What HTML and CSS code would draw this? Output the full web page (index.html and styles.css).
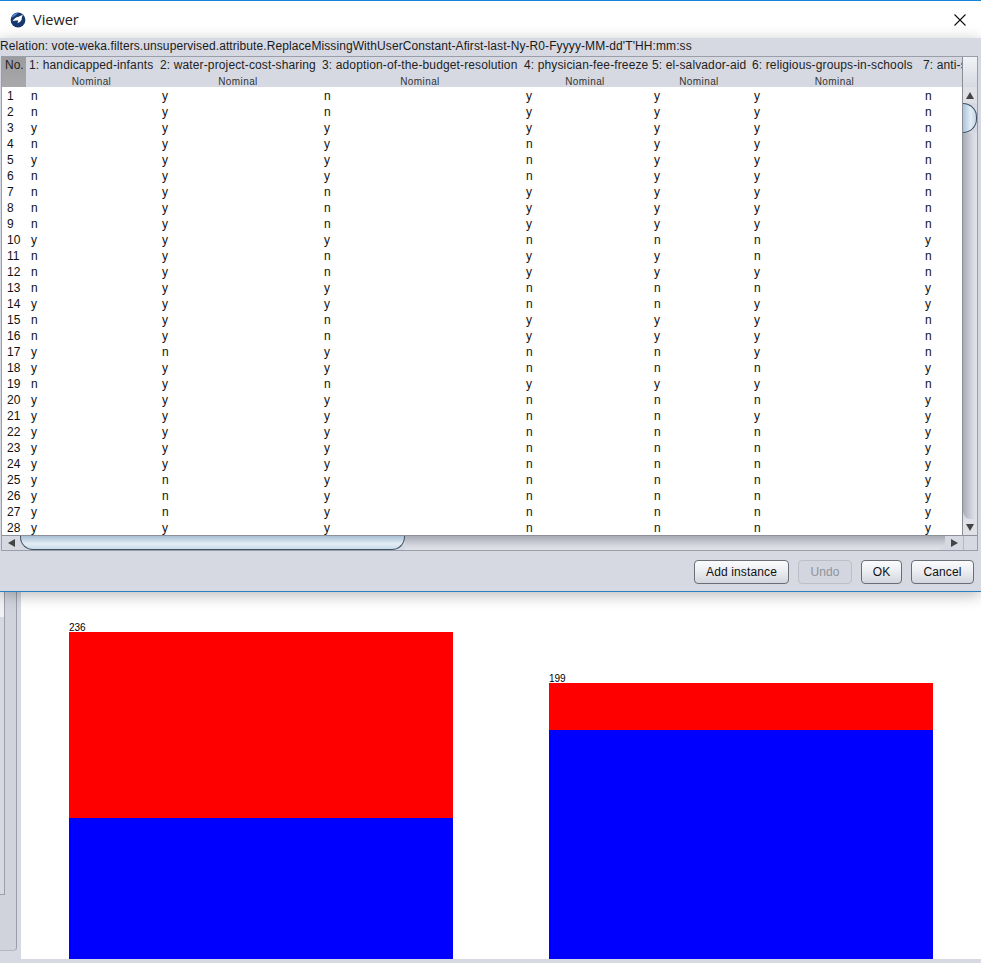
FILE: index.html
```html
<!DOCTYPE html>
<html lang="en">
<head>
    <meta charset="UTF-8">
    <title>Viewer</title>
    <link rel="stylesheet" href="styles.css">
</head>
<body>
    <div class="titlebar">
        <svg class="app-icon" width="16" height="16" viewBox="0 0 16 16">
            <circle cx="8" cy="8" r="7.4" fill="#17386f"/>
            <path d="M1.4 6 A7 7 0 0 1 8 0.9 L5.5 3.6 Z" fill="#4f86d4"/>
            <path d="M2.6 9.2 C4 6.6 6 5.2 8 5 L12.8 2.8 L11.8 5.6 C12.2 8 10.2 10.6 7.6 11.2 L8.2 8.6 C6.2 8.2 4.2 8.4 2.6 9.2 Z" fill="#fff"/>
        </svg>
        <span class="title">Viewer</span>
        <svg class="close" width="12" height="12" viewBox="0 0 12 12">
            <path d="M0.5 0.5 L11.5 11.5 M11.5 0.5 L0.5 11.5" stroke="#111" stroke-width="1.1" fill="none"/>
        </svg>
    </div>

    <div class="dialog">
        <div class="relation">Relation: vote-weka.filters.unsupervised.attribute.ReplaceMissingWithUserConstant-Afirst-last-Ny-R0-Fyyyy-MM-dd'T'HH:mm:ss</div>
        <div class="frame">
            <div class="frame-body">
                <div class="table-clip">
                    <table class="data">
                        <colgroup>
                            <col class="c-no"><col class="c1"><col class="c2"><col class="c3"><col class="c4"><col class="c5"><col class="c6"><col class="c7">
                        </colgroup>
                        <thead>
                            <tr>
                                <th class="no-head">No.</th>
                                <th><div class="name">1: handicapped-infants</div><div class="type">Nominal</div></th>
                                <th><div class="name">2: water-project-cost-sharing</div><div class="type">Nominal</div></th>
                                <th><div class="name">3: adoption-of-the-budget-resolution</div><div class="type">Nominal</div></th>
                                <th><div class="name">4: physician-fee-freeze</div><div class="type">Nominal</div></th>
                                <th><div class="name">5: el-salvador-aid</div><div class="type">Nominal</div></th>
                                <th><div class="name">6: religious-groups-in-schools</div><div class="type">Nominal</div></th>
                                <th><div class="name">7: anti-s</div></th>
                            </tr>
                        </thead>
                        <tbody>
                            <tr><td>1</td><td>n</td><td>y</td><td>n</td><td>y</td><td>y</td><td>y</td><td>n</td></tr>
                            <tr><td>2</td><td>n</td><td>y</td><td>n</td><td>y</td><td>y</td><td>y</td><td>n</td></tr>
                            <tr><td>3</td><td>y</td><td>y</td><td>y</td><td>y</td><td>y</td><td>y</td><td>n</td></tr>
                            <tr><td>4</td><td>n</td><td>y</td><td>y</td><td>n</td><td>y</td><td>y</td><td>n</td></tr>
                            <tr><td>5</td><td>y</td><td>y</td><td>y</td><td>n</td><td>y</td><td>y</td><td>n</td></tr>
                            <tr><td>6</td><td>n</td><td>y</td><td>y</td><td>n</td><td>y</td><td>y</td><td>n</td></tr>
                            <tr><td>7</td><td>n</td><td>y</td><td>n</td><td>y</td><td>y</td><td>y</td><td>n</td></tr>
                            <tr><td>8</td><td>n</td><td>y</td><td>n</td><td>y</td><td>y</td><td>y</td><td>n</td></tr>
                            <tr><td>9</td><td>n</td><td>y</td><td>n</td><td>y</td><td>y</td><td>y</td><td>n</td></tr>
                            <tr><td>10</td><td>y</td><td>y</td><td>y</td><td>n</td><td>n</td><td>n</td><td>y</td></tr>
                            <tr><td>11</td><td>n</td><td>y</td><td>n</td><td>y</td><td>y</td><td>n</td><td>n</td></tr>
                            <tr><td>12</td><td>n</td><td>y</td><td>n</td><td>y</td><td>y</td><td>y</td><td>n</td></tr>
                            <tr><td>13</td><td>n</td><td>y</td><td>y</td><td>n</td><td>n</td><td>n</td><td>y</td></tr>
                            <tr><td>14</td><td>y</td><td>y</td><td>y</td><td>n</td><td>n</td><td>y</td><td>y</td></tr>
                            <tr><td>15</td><td>n</td><td>y</td><td>n</td><td>y</td><td>y</td><td>y</td><td>n</td></tr>
                            <tr><td>16</td><td>n</td><td>y</td><td>n</td><td>y</td><td>y</td><td>y</td><td>n</td></tr>
                            <tr><td>17</td><td>y</td><td>n</td><td>y</td><td>n</td><td>n</td><td>y</td><td>n</td></tr>
                            <tr><td>18</td><td>y</td><td>y</td><td>y</td><td>n</td><td>n</td><td>n</td><td>y</td></tr>
                            <tr><td>19</td><td>n</td><td>y</td><td>n</td><td>y</td><td>y</td><td>y</td><td>n</td></tr>
                            <tr><td>20</td><td>y</td><td>y</td><td>y</td><td>n</td><td>n</td><td>n</td><td>y</td></tr>
                            <tr><td>21</td><td>y</td><td>y</td><td>y</td><td>n</td><td>n</td><td>y</td><td>y</td></tr>
                            <tr><td>22</td><td>y</td><td>y</td><td>y</td><td>n</td><td>n</td><td>n</td><td>y</td></tr>
                            <tr><td>23</td><td>y</td><td>y</td><td>y</td><td>n</td><td>n</td><td>n</td><td>y</td></tr>
                            <tr><td>24</td><td>y</td><td>y</td><td>y</td><td>n</td><td>n</td><td>n</td><td>y</td></tr>
                            <tr><td>25</td><td>y</td><td>n</td><td>y</td><td>n</td><td>n</td><td>n</td><td>y</td></tr>
                            <tr><td>26</td><td>y</td><td>n</td><td>y</td><td>n</td><td>n</td><td>n</td><td>y</td></tr>
                            <tr><td>27</td><td>y</td><td>n</td><td>y</td><td>n</td><td>n</td><td>n</td><td>y</td></tr>
                            <tr><td>28</td><td>y</td><td>y</td><td>y</td><td>n</td><td>n</td><td>n</td><td>y</td></tr>
                        </tbody>
                    </table>
                </div>
                <div class="vscroll">
                    <div class="corner"></div>
                    <div class="vtrack">
                        <div class="arrow-btn"><span class="tri tri-up"></span></div>
                        <div class="vthumb"></div>
                        <div class="vrest"></div>
                        <div class="arrow-btn"><span class="tri tri-down"></span></div>
                    </div>
                </div>
            </div>
            <div class="hscroll">
                <div class="arrow-btn-h"><span class="tri tri-left"></span></div>
                <div class="hthumb"></div>
                <div class="hrest"></div>
                <div class="arrow-btn-h"><span class="tri tri-right"></span></div>
                <div class="hcorner"></div>
            </div>
        </div>
        <div class="buttons">
            <button class="btn btn-add" type="button">Add instance</button>
            <button class="btn btn-undo" type="button" disabled>Undo</button>
            <button class="btn btn-ok" type="button">OK</button>
            <button class="btn btn-cancel" type="button">Cancel</button>
        </div>
    </div>

    <div class="below">
        <div class="side">
            <div class="side-box">
                <div class="side-inner">
                    <div class="side-inner-top"></div>
                </div>
            </div>
        </div>
        <div class="chart">
            <div class="bar">
                <div class="count">236</div>
                <div class="red red-a"></div>
                <div class="blue blue-a"></div>
            </div>
            <div class="bar">
                <div class="count">199</div>
                <div class="red red-b"></div>
                <div class="blue blue-b"></div>
            </div>
        </div>
    </div>
</body>
</html>
```

FILE: styles.css
```css
html, body {
    margin: 0;
    padding: 0;
}
body {
    width: 981px;
    height: 963px;
    overflow: hidden;
    background: #d6d9e2;
    font-family: "Liberation Sans", Arial, sans-serif;
    font-size: 12px;
    color: #111;
    display: flex;
    flex-direction: column;
}

/* title bar */
.titlebar {
    height: 37px;
    flex: none;
    background: #fff;
    border-top: 1px solid #1583d7;
    display: flex;
    align-items: center;
    padding-left: 10px;
    padding-right: 15px;
}
.app-icon {
    margin-right: 7px;
}
.title {
    font-family: "Open Sans", sans-serif;
    font-size: 14.5px;
    color: #222;
}
.close {
    margin-left: auto;
}

/* dialog */
.dialog {
    flex: none;
    height: 553px;
    background: #d6d9e2;
    border-bottom: 1px solid #2a7fc0;
    box-shadow: 0 3px 14px rgba(0, 0, 0, 0.28);
    position: relative;
    z-index: 1;
    display: flex;
    flex-direction: column;
}
.relation {
    height: 18px;
    line-height: 17px;
    white-space: nowrap;
    color: #1a1a1a;
    letter-spacing: 0.09px;
}
.frame {
    margin-left: 1px;
    width: 977px;
    height: 495px;
    box-sizing: border-box;
    border: 1px solid #9a9ea8;
    display: flex;
    flex-direction: column;
}
.frame-body {
    display: flex;
    height: 478px;
}
.table-clip {
    width: 961px;
    overflow: hidden;
    background: #fff;
}

/* table */
.data {
    table-layout: fixed;
    border-collapse: collapse;
    width: 961px;
}
.c-no { width: 24px; }
.c1 { width: 131px; }
.c2 { width: 162px; }
.c3 { width: 202px; }
.c4 { width: 128px; }
.c5 { width: 100px; }
.c6 { width: 171px; }
.c7 { width: 43px; }
.data th {
    height: 30px;
    padding: 0;
    background: #d6d9e2;
    font-weight: normal;
    color: #222;
    vertical-align: top;
}
.data th.no-head {
    background: linear-gradient(#9c9c9e, #a9a9ab);
    line-height: 16px;
    text-align: left;
    padding-left: 3px;
}
.name {
    height: 16px;
    line-height: 16px;
    text-align: left;
    padding-left: 3px;
    white-space: nowrap;
    overflow: hidden;
    letter-spacing: 0.13px;
}
.type {
    height: 14px;
    line-height: 17px;
    font-size: 10px;
    letter-spacing: 0.4px;
    color: #333;
    text-align: center;
}
.data td {
    height: 14px;
    padding: 2px 0 0 5px;
    line-height: 14px;
    color: #111;
}

/* scrollbars */
.vscroll {
    width: 14px;
    border-left: 1px solid #8a8d96;
    display: flex;
    flex-direction: column;
}
.corner {
    height: 30px;
    flex: none;
    background: linear-gradient(#f2f3f6, #d6d9e2);
}
.vtrack {
    flex: 1;
    display: flex;
    flex-direction: column;
    background: #d6d9e2;
}
.arrow-btn {
    height: 16px;
    flex: none;
    display: flex;
    align-items: center;
    justify-content: center;
    background: #dfe1e7;
}
.vthumb {
    height: 30px;
    flex: none;
    box-sizing: border-box;
    border: 1px solid #3f5266;
    border-left: none;
    border-radius: 0 14px 14px 0;
    background: linear-gradient(90deg, #a9c4dc, #e3edf5 60%, #c3d6e6);
}
.vrest {
    flex: 1;
    background: linear-gradient(90deg, #a8abb3, #d6d9e2 70%, #e2e4ea);
    border-radius: 0 0 0 8px;
}
.hscroll {
    height: 15px;
    display: flex;
    background: #d6d9e2;
    border-top: 1px solid #8e9199;
    box-sizing: border-box;
}
.arrow-btn-h {
    width: 18px;
    flex: none;
    display: flex;
    align-items: center;
    justify-content: center;
}
.hthumb {
    width: 385px;
    flex: none;
    box-sizing: border-box;
    border: 1px solid #3f5266;
    border-top: none;
    border-radius: 0 0 13px 13px;
    background: linear-gradient(#a9bfd4, #e3edf5 60%, #c9dbe9);
}
.hrest {
    width: 540px;
    flex: none;
    background: linear-gradient(#a8abb3, #d6d9e2 70%, #e2e4ea);
    border-radius: 0 0 8px 0;
}
.hcorner {
    flex: 1;
    border-left: 1px solid #b5b8c0;
}
.tri {
    display: block;
    width: 0;
    height: 0;
}
.tri-up {
    border-left: 4px solid transparent;
    border-right: 4px solid transparent;
    border-bottom: 7px solid #444;
}
.tri-down {
    border-left: 4px solid transparent;
    border-right: 4px solid transparent;
    border-top: 7px solid #444;
}
.tri-left {
    border-top: 4px solid transparent;
    border-bottom: 4px solid transparent;
    border-right: 7px solid #444;
}
.tri-right {
    border-top: 4px solid transparent;
    border-bottom: 4px solid transparent;
    border-left: 7px solid #444;
}

/* buttons */
.buttons {
    display: flex;
    justify-content: flex-end;
    gap: 9px;
    padding-right: 7px;
    margin-top: 9px;
}
.btn {
    height: 24px;
    padding: 0;
    font-family: "Liberation Sans", Arial, sans-serif;
    font-size: 12px;
    letter-spacing: 0.13px;
    color: #111;
    border: 1px solid #6b6e76;
    border-radius: 4px;
    background: linear-gradient(#fbfbfc, #eceef2 45%, #d3d6de);
}
.btn-add { width: 95px; }
.btn-undo {
    width: 54px;
    color: #8f939b;
    border-color: #bcbfc7;
    background: #d3d6de;
}
.btn-ok { width: 41px; }
.btn-cancel { width: 63px; }

/* lower window */
.below {
    flex: 1;
    display: flex;
    padding-bottom: 4px;
}
.side {
    width: 21px;
    flex: none;
    box-sizing: border-box;
    padding-right: 4px;
}
.side-box {
    height: 359px;
    box-sizing: border-box;
    border-right: 1px solid #9a9ea8;
    border-bottom: 1px solid #b5b8c0;
    border-radius: 0 0 4px 0;
    background: #d0d3dc;
}
.side-inner {
    width: 5px;
    height: 303px;
    box-sizing: border-box;
    border-right: 1px solid #9a9ea8;
    border-bottom: 1px solid #9a9ea8;
    background: #d6d9e2;
}
.side-inner-top {
    height: 25px;
    background: #f1f1f3;
}
.chart {
    flex: 1;
    background: #fff;
    display: flex;
    align-items: flex-end;
    gap: 96px;
    padding-left: 48px;
}
.bar {
    width: 384px;
}
.count {
    font-size: 10px;
    line-height: 9px;
    color: #000;
}
.red { background: #f00; }
.blue { background: #00f; }
.red-a { height: 186px; }
.blue-a { height: 141px; }
.red-b { height: 47px; }
.blue-b { height: 229px; }
```
